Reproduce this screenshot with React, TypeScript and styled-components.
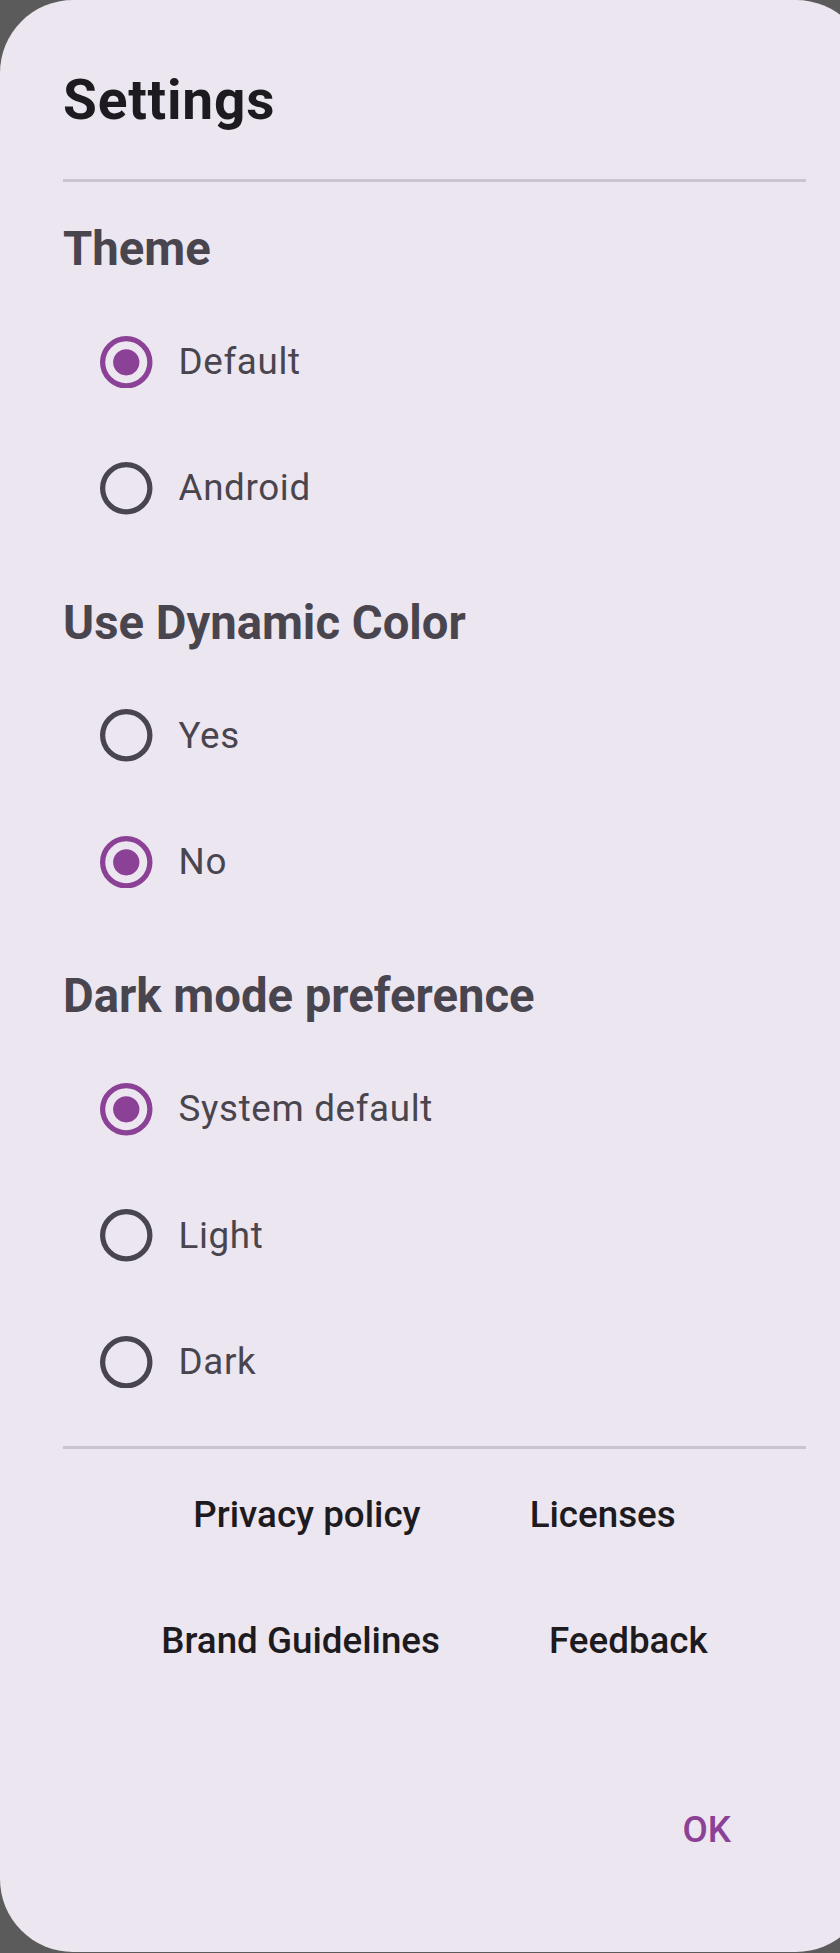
import React, { useState } from "react";
import styled, { createGlobalStyle } from "styled-components";

const GlobalStyle = createGlobalStyle`
  html, body {
    margin: 0;
    padding: 0;
    background: #5b5b5b;
    overflow: hidden;
  }
  body {
    width: 840px;
    height: 1953px;
  }
`;

const PRIMARY = "#8b4196";
const ON_SURFACE = "#1d1b20";
const ON_VARIANT = "#49454f";

const Dialog = styled.div`
  width: 869px;
  height: 1952px;
  box-sizing: border-box;
  border-radius: 73px;
  background: #ece6f0;
  padding: 69px 63px 0;
  display: flex;
  flex-direction: column;
  font-family: Roboto, "Noto Sans", sans-serif;
`;

const Title = styled.h1`
  margin: 0;
  font-size: 55px;
  line-height: 63px;
  font-weight: 700;
  letter-spacing: 0.8px;
  color: ${ON_SURFACE};
`;

const Divider = styled.div<{ $top: number }>`
  height: 3px;
  background: #cac4d0;
  margin-top: ${(p) => p.$top}px;
  flex-shrink: 0;
`;

const SectionHeader = styled.h2<{ $top: number }>`
  margin: ${(p) => p.$top}px 0 20px;
  font-size: 47.25px;
  line-height: 60px;
  font-weight: 700;
  color: ${ON_VARIANT};
`;

const RadioList = styled.div`
  display: flex;
  flex-direction: column;
`;

const RadioRow = styled.label`
  height: 126.3px;
  display: flex;
  align-items: center;
  cursor: pointer;
`;

const RadioIcon = styled.svg`
  width: 52.5px;
  height: 52.5px;
  margin-left: 37px;
  flex-shrink: 0;
`;

const RadioLabel = styled.span`
  margin-left: 26px;
  font-size: 36.75px;
  line-height: 48px;
  font-weight: 400;
  letter-spacing: 0.66px;
  color: ${ON_VARIANT};
`;

const LinkRow = styled.div`
  height: 126px;
  display: flex;
  justify-content: center;
  align-items: center;
  gap: 46px;
`;

const TextButton = styled.button<{ $color: string }>`
  border: none;
  background: none;
  padding: 0 31.5px;
  height: 105px;
  font-family: Roboto, "Noto Sans", sans-serif;
  font-size: 36.75px;
  font-weight: 500;
  color: ${(p) => p.$color};
  cursor: pointer;
`;

const Links = styled.div`
  margin-top: 2px;
  display: flex;
  flex-direction: column;
`;

const Actions = styled.div`
  margin-top: 63px;
  height: 126px;
  display: flex;
  justify-content: flex-end;
  align-items: center;
  padding-right: 43.5px;
`;

type Section = { title: string; options: string[]; top: number };

const sections: Section[] = [
  { title: "Theme", options: ["Default", "Android"], top: 37 },
  { title: "Use Dynamic Color", options: ["Yes", "No"], top: 41 },
  { title: "Dark mode preference", options: ["System default", "Light", "Dark"], top: 41 },
];

function Radio({ selected }: { selected: boolean }) {
  const color = selected ? PRIMARY : ON_VARIANT;
  return (
    <RadioIcon viewBox="0 0 20 20">
      <circle cx="10" cy="10" r="9" fill="none" stroke={color} strokeWidth="2" />
      {selected && <circle cx="10" cy="10" r="5" fill={color} />}
    </RadioIcon>
  );
}

export default function App() {
  const [values, setValues] = useState<string[]>(["Default", "No", "System default"]);

  return (
    <>
      <GlobalStyle />
      <Dialog>
        <Title>Settings</Title>
        <Divider $top={47} />
        {sections.map((s, i) => (
          <div key={s.title}>
            <SectionHeader $top={s.top}>{s.title}</SectionHeader>
            <RadioList>
              {s.options.map((o) => (
                <RadioRow
                  key={o}
                  onClick={() =>
                    setValues((v) => v.map((x, j) => (j === i ? o : x)))
                  }
                >
                  <Radio selected={values[i] === o} />
                  <RadioLabel>{o}</RadioLabel>
                </RadioRow>
              ))}
            </RadioList>
          </div>
        ))}
        <Divider $top={21} />
        <Links>
          <LinkRow>
            <TextButton $color={ON_SURFACE}>Privacy policy</TextButton>
            <TextButton $color={ON_SURFACE}>Licenses</TextButton>
          </LinkRow>
          <LinkRow>
            <TextButton $color={ON_SURFACE}>Brand Guidelines</TextButton>
            <TextButton $color={ON_SURFACE}>Feedback</TextButton>
          </LinkRow>
        </Links>
        <Actions>
          <TextButton $color={PRIMARY}>OK</TextButton>
        </Actions>
      </Dialog>
    </>
  );
}
